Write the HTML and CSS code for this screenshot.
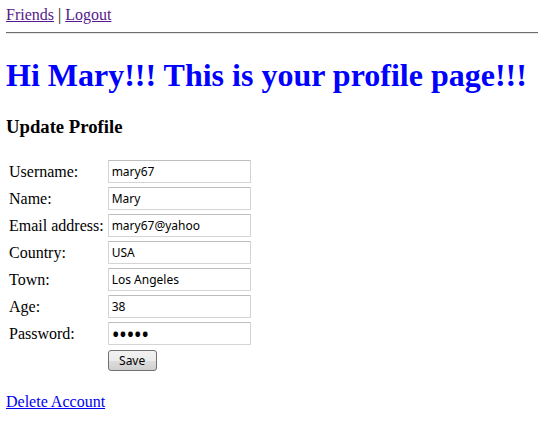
FILE: index.html
```html
<!DOCTYPE html>
<html>
<head>
<meta charset="utf-8">
<title>Profile</title>
<link rel="stylesheet" href="styles.css">
</head>
<body>
<div class="nav"><a class="visited" href="#friends">Friends</a> | <a class="visited" href="#logout">Logout</a></div>
<hr class="rule">
<h1 class="greet">Hi Mary!!! This is your profile page!!!</h1>
<h3 class="sub">Update Profile</h3>
<form class="form">
<table class="grid">
<tr><td class="lbl">Username:</td><td><input class="field" type="text" value="mary67"></td></tr>
<tr><td class="lbl">Name:</td><td><input class="field" type="text" value="Mary"></td></tr>
<tr><td class="lbl">Email address:</td><td><input class="field" type="text" value="mary67@yahoo"></td></tr>
<tr><td class="lbl">Country:</td><td><input class="field" type="text" value="USA"></td></tr>
<tr><td class="lbl">Town:</td><td><input class="field" type="text" value="Los Angeles"></td></tr>
<tr><td class="lbl">Age:</td><td><input class="field" type="text" value="38"></td></tr>
<tr><td class="lbl">Password:</td><td><input class="field pw" type="password" value="12345"></td></tr>
<tr><td></td><td><button class="save" type="button">Save</button></td></tr>
</table>
</form>
<div class="del"><a class="link" href="#delete">Delete Account</a></div>
</body>
</html>
```
FILE: styles.css
```css
html, body {
  background: #fff;
}
body {
  margin: 6px 0 6px 6px;
  font-family: "Liberation Serif", "Times New Roman", serif;
  font-size: 16px;
  color: #000;
}
.nav {
  line-height: 18px;
}
.visited {
  color: #551a8b;
}
.link {
  color: #0000ee;
}
.rule {
  margin: 8px 0 0 0;
  border: 0;
  border-top: 1px solid #6e6e6e;
  border-bottom: 1px solid #e8e8e8;
  height: 0;
}
.greet {
  color: #0000ff;
  font-size: 32px;
  margin: 23px 0 0 0;
  line-height: 37px;
}
.sub {
  font-size: 18.7px;
  margin: 22px 0 0 0;
  line-height: 22px;
}
.form {
  margin: 19px 0 0 0;
}
.grid {
  border-collapse: separate;
  border-spacing: 2px;
  margin-left: 0;
}
.grid td {
  padding: 1px;
  vertical-align: middle;
}
.lbl {
  white-space: nowrap;
}
.field {
  box-sizing: border-box;
  width: 143px;
  height: 23px;
  margin: 0;
  padding: 1px 3px;
  border: 1px solid #d4d4d4;
  border-top-color: #bdbdbd;
  border-radius: 1px;
  font-family: "Noto Sans", "DejaVu Sans", sans-serif;
  font-size: 12px;
  color: #000;
  background: #fff;
}
.pw {
  font-size: 21px;
  letter-spacing: -0.5px;
  padding: 0 3px;
}
.save {
  box-sizing: border-box;
  width: 49px;
  height: 21px;
  margin: 0;
  padding: 0;
  border: 1px solid #707070;
  border-radius: 3px;
  background: linear-gradient(#f2f2f2 0%, #ebebeb 50%, #dddddd 51%, #cfcfcf 100%);
  font-family: "Noto Sans", "DejaVu Sans", sans-serif;
  font-size: 12px;
  color: #000;
}
.del {
  margin-top: 19px;
  line-height: 18px;
}
```
